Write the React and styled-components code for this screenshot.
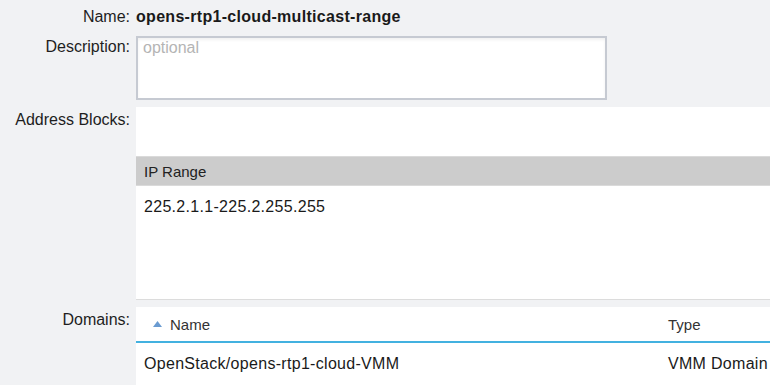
import React from "react";
import styled, { createGlobalStyle } from "styled-components";

const GlobalStyle = createGlobalStyle`
  html, body {
    margin: 0;
    padding: 0;
    background: #f1f2f4;
    font-family: "Liberation Sans", Arial, sans-serif;
    color: #1a1a1a;
  }
`;

const Form = styled.div`
  display: grid;
  grid-template-columns: 130px 1fr;
  column-gap: 6px;
  width: 770px;
  height: 385px;
  overflow: hidden;
`;

const Label = styled.div`
  text-align: right;
  font-size: 16px;
  line-height: 18px;
  padding-top: ${(p) => p.$top || 4}px;
  white-space: nowrap;
  color: #1e1e1e;
`;

const Value = styled.div`
  font-size: 16px;
  line-height: 18px;
  font-weight: bold;
  padding-top: 8px;
  height: 36px;
  box-sizing: border-box;
  letter-spacing: 0.3px;
  white-space: nowrap;
`;

const TextArea = styled.textarea`
  display: block;
  width: 471px;
  height: 64px;
  box-sizing: border-box;
  border: 2px solid #c6cad2;
  box-shadow: inset 0 2px 3px rgba(0, 0, 0, 0.06);
  background: #fff;
  font-family: inherit;
  font-size: 16px;
  line-height: 18px;
  padding: 1px 5px;
  margin: 0 0 7px;
  resize: none;
  outline: none;

  &::placeholder {
    color: #b4b4b4;
  }
`;

const Panel = styled.div`
  background: #fff;
  height: ${(p) => p.$height}px;
  border-bottom: ${(p) => (p.$border ? "1px solid #dcdcdc" : "none")};
  box-sizing: border-box;
  margin-bottom: ${(p) => p.$gap || 0}px;
  display: flex;
  flex-direction: column;
`;

const Spacer = styled.div`
  height: ${(p) => p.$h}px;
  flex-shrink: 0;
`;

const GrayHeader = styled.div`
  height: 30px;
  background: #cccccc;
  border-top: 1px solid #dadada;
  border-bottom: 1px solid #dadada;
  box-sizing: border-box;
  display: flex;
  align-items: center;
  padding-left: 8px;
  font-size: 15px;
  color: #222;
`;

const Row = styled.div`
  display: grid;
  grid-template-columns: 524px 1fr;
  align-items: center;
  height: ${(p) => p.$h}px;
  padding-left: 8px;
  font-size: 16px;
  letter-spacing: 0.3px;
  color: #1a1a1a;
  box-sizing: border-box;
  white-space: nowrap;
`;

const HeadRow = styled(Row)`
  border-bottom: 2px solid #43b1e0;
  color: #333;
  font-size: 15px;
  letter-spacing: 0;
`;

const SortName = styled.span`
  display: flex;
  align-items: center;
  gap: 8px;
  padding-left: 9px;
`;

const Arrow = () => (
  <svg width="9" height="6" viewBox="0 0 9 6">
    <polygon points="4.5,0 9,6 0,6" fill="#6a9bd1" />
  </svg>
);

export default function App() {
  return (
    <>
      <GlobalStyle />
      <Form>
        <Label $top={8}>Name:</Label>
        <Value>opens-rtp1-cloud-multicast-range</Value>

        <Label $top={2}>Description:</Label>
        <div>
          <TextArea placeholder="optional" />
        </div>

        <Label $top={4}>Address Blocks:</Label>
        <Panel $height={193} $border $gap={7}>
          <Spacer $h={49} />
          <GrayHeader>IP Range</GrayHeader>
          <Row $h={42}>225.2.1.1-225.2.255.255</Row>
        </Panel>

        <Label $top={4}>Domains:</Label>
        <Panel $height={78}>
          <HeadRow $h={36}>
            <SortName>
              <Arrow />
              Name
            </SortName>
            <span>Type</span>
          </HeadRow>
          <Row $h={42}>
            <span>OpenStack/opens-rtp1-cloud-VMM</span>
            <span>VMM Domain</span>
          </Row>
        </Panel>
      </Form>
    </>
  );
}
